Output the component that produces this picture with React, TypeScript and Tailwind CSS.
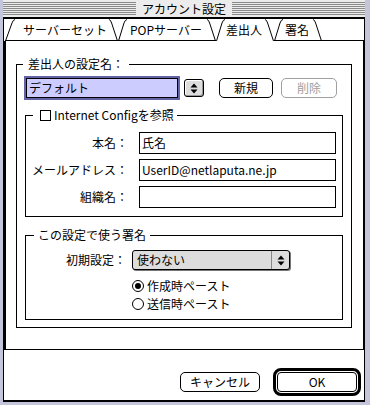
import React from 'react';

const Stripes = () => (
  <div className="h-[13px] flex-1 bg-[image:repeating-linear-gradient(to_bottom,#8a8a8a_0px,#8a8a8a_1px,#ececec_1px,#ececec_2px)]" />
);

const Slant = ({ side, w = 9, line = true }: { side: 'l' | 'r'; w?: number; line?: boolean }) => (
  <svg width={w} height="22" className="block shrink-0">
    <path
      d={side === 'l' ? `M0.5 22 L${w - 3} 4 Q${w - 1.8} 0.6 ${w} 0.5` : 'M0 0.5 Q1.6 0.6 2.6 4 L8.5 22'}
      fill="none"
      stroke="black"
    />
    {line && <path d={`M0 21.5 H${w}`} stroke="black" />}
  </svg>
);

const Tab = ({ label, width, pl, first, active }: { label: string; width: number; pl: number; first?: boolean; active?: boolean }) => (
  <div className="flex h-full">
    <Slant side="l" w={first ? 10 : 9} line={!active} />
    <div
      className={`h-full whitespace-nowrap pt-[3px] ${active ? '' : 'border-b border-black'}`}
      style={{ width, paddingLeft: pl }}
    >
      {label}
    </div>
    <Slant side="r" line={!active} />
  </div>
);

const UpDown = () => (
  <svg width="8" height="11" viewBox="0 0 8 11">
    <path d="M4 0.5 L7.5 4.5 H0.5 Z" fill="black" />
    <path d="M4 10.5 L7.5 6.5 H0.5 Z" fill="black" />
  </svg>
);

const Field = ({ label, value }: { label: string; value: string }) => (
  <div className="flex items-center">
    <div className="w-[102px] text-right">{label}</div>
    <div className="ml-[11px] flex h-[22px] w-[197px] items-center border border-black pl-[2px]">{value}</div>
  </div>
);

const Radio = ({ label, checked }: { label: string; checked?: boolean }) => (
  <div className="flex h-[18px] items-center">
    <div className="flex h-[12px] w-[12px] items-center justify-center rounded-full border border-black bg-white">
      {checked && <div className="h-[6px] w-[6px] rounded-full bg-black" />}
    </div>
    <span className="ml-[3px]">{label}</span>
  </div>
);

export default function App() {
  return (
    <div className="flex h-[405px] w-[370px] flex-col overflow-hidden bg-[#c4c4da] pb-[3px] pl-[3px] pr-[5px] font-['Noto_Sans_CJK_JP','Noto_Sans',sans-serif] text-[12px] leading-[16px] text-black">
      {/* title bar */}
      <div className="flex h-[18px] shrink-0 items-center border-b border-black bg-[#ececec]">
        <Stripes />
        <div className="px-[6px]">アカウント設定</div>
        <Stripes />
      </div>

      <div className="flex flex-1 flex-col border border-b-2 border-black bg-white">
        {/* tabs */}
        <div className="flex h-[22px] shrink-0 pl-[1px]">
          <Tab label="サーバーセット" width={94} pl={8} first />
          <Tab label="POPサーバー" width={80} pl={3} />
          <Tab label="差出人" width={40} pl={1} active />
          <Tab label="署名" width={30} pl={2} />
          <div className="flex-1 border-b border-black" />
        </div>

        {/* panel */}
        <div className="h-[309px] shrink-0 border-b border-l-2 border-r border-black">
          <fieldset className="ml-[10px] mt-[15px] w-[336px] border border-black">
            <legend className="ml-[6px] px-[5px]">差出人の設定名：</legend>

            <div className="ml-[7px] mt-[4px] flex items-center">
              <div className="h-[24px] w-[156px] border-2 border-[#6262a6]">
                <div className="flex h-full items-center border border-black bg-[#ccccff] pl-[2px]">デフォルト</div>
              </div>
              <div className="ml-[4px] flex h-[18px] w-[20px] items-center justify-center rounded-[3px] border border-black bg-[#dddddd] shadow-[inset_-1px_-1px_0_#999999,inset_1px_1px_0_#ffffff]">
                <UpDown />
              </div>
              <button className="ml-[15px] h-[20px] w-[54px] rounded-[5px] border border-black bg-white">新規</button>
              <button className="ml-[8px] h-[20px] w-[56px] rounded-[5px] border border-[#a0a0a0] bg-white text-[#a0a0a0]">削除</button>
            </div>

            <fieldset className="ml-[8px] mt-[7px] w-[318px] border border-black">
              <legend className="ml-[7px] pl-[7px] pr-[3px]">
                <span className="flex items-center">
                  <span className="mr-[3px] h-[11px] w-[11px] border border-black bg-white" />
                  Internet Configを参照
                </span>
              </legend>
              <div className="mt-[9px] flex flex-col gap-[5px] pb-[8px]">
                <Field label="本名：" value="氏名" />
                <Field label="メールアドレス：" value="UserID@netlaputa.ne.jp" />
                <Field label="組織名：" value="" />
              </div>
            </fieldset>

            <fieldset className="mb-[7px] ml-[8px] mt-[10px] w-[318px] border border-black">
              <legend className="ml-[8px] px-[4px]">この設定で使う署名</legend>
              <div className="mt-[7px] flex items-center">
                <div className="w-[100px] text-right">初期設定：</div>
                <div className="ml-[6px] flex h-[20px] w-[158px] rounded-[3px] border border-black bg-[#dddddd] shadow-[1px_1px_0_#777777]">
                  <div className="flex flex-1 items-center pl-[4px]">使わない</div>
                  <div className="flex w-[18px] items-center justify-center border-l border-[#888888]">
                    <UpDown />
                  </div>
                </div>
              </div>
              <div className="ml-[106px] mt-[7px] flex flex-col pb-[6px]">
                <Radio label="作成時ペースト" checked />
                <Radio label="送信時ペースト" />
              </div>
            </fieldset>
          </fieldset>
        </div>

        {/* buttons */}
        <div className="flex flex-1 items-start justify-end pr-[3px] pt-[18px]">
          <div className="flex items-center">
            <button className="mr-[13px] h-[20px] w-[80px] rounded-[5px] border border-black bg-white">キャンセル</button>
            <div className="h-[28px] w-[88px] rounded-[8px] border-[3px] border-black p-[1px]">
              <button className="h-full w-full rounded-[4px] border border-black bg-white">OK</button>
            </div>
          </div>
        </div>
      </div>
    </div>
  );
}
